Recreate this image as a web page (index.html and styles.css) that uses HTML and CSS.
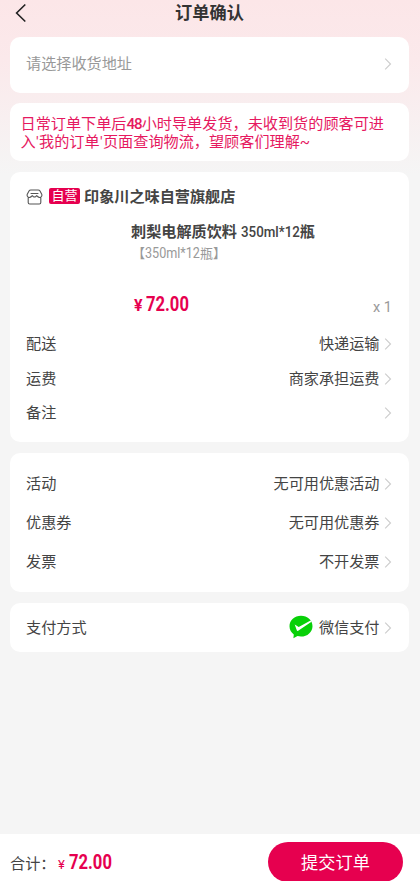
FILE: index.html
```html
<!DOCTYPE html>
<html lang="zh-CN">
<head>
<meta charset="UTF-8">
<meta name="viewport" content="width=device-width, initial-scale=1">
<title>订单确认</title>
<link rel="stylesheet" href="styles.css">
</head>
<body>
<svg class="defs" aria-hidden="true"><symbol id="chevron" viewBox="0 0 8 14"><path d="M1.200 1.700 6.500 7 1.200 12.300" fill="none" stroke="currentColor" stroke-width="1.100"/></symbol></svg>
<div class="page">
  <header class="header">
    <svg class="back" viewBox="0 0 12 20"><path d="M10.300 1.500 1.600 10l8.700 8.500" fill="none" stroke="#222" stroke-width="1.600"/></svg>
    <h1 class="title">订单确认</h1>
  </header>
  <main class="cards">
    <section class="card address">
      <div class="row"><span>请选择收货地址</span><svg class="chevron"><use href="#chevron"/></svg></div>
    </section>
    <section class="card notice">日常订单下单后<b class="hours">48</b>小时导单发货，未收到货的顾客可进<br>入<span class="quote">'</span>我的订单<span class="quote">'</span>页面查询物流，望顾客们理解~</section>
    <section class="card order">
      <div class="shop">
        <svg class="shop-icon" viewBox="0 0 17 16"><path d="M4.800 1h7.400q1.200 0 1.800 1l1.600 2.900q.8 1.800-.5 3-1.800 1.300-3.500-.4l-.8-.9-1 .9q-1.300 1-2.600 0l-1-.9-.8.9Q3.700 9.200 1.900 7.900.6 6.700 1.400 4.900L3 2q.6-1 1.800-1zM5 4.500h7M2.200 8.500v5q0 1.500 1.500 1.500h9.600q1.500 0 1.500-1.500v-5" fill="none" stroke="#555" stroke-width="1.100" stroke-linecap="round" stroke-linejoin="round"/></svg>
        <span class="badge">自营</span>
        <strong class="shop-name">印象川之味自营旗舰店</strong>
      </div>
      <div class="product">
        <div class="product-name">刺梨电解质饮料 <span class="name-spec">350ml*12</span>瓶</div>
        <div class="spec">【<span class="spec-text">350ml*12</span>瓶】</div>
        <div class="price-line">
          <span class="price"><span class="yen">¥</span><span class="amount">72.00</span></span>
          <span class="count">x 1</span>
        </div>
      </div>
      <div class="row"><span>配送</span><span class="value">快递运输<svg class="chevron"><use href="#chevron"/></svg></span></div>
      <div class="row"><span>运费</span><span class="value">商家承担运费<svg class="chevron"><use href="#chevron"/></svg></span></div>
      <div class="row"><span>备注</span><span class="value"><svg class="chevron"><use href="#chevron"/></svg></span></div>
    </section>
    <section class="card offers">
      <div class="row"><span>活动</span><span class="value">无可用优惠活动<svg class="chevron"><use href="#chevron"/></svg></span></div>
      <div class="row"><span>优惠券</span><span class="value">无可用优惠券<svg class="chevron"><use href="#chevron"/></svg></span></div>
      <div class="row"><span>发票</span><span class="value">不开发票<svg class="chevron"><use href="#chevron"/></svg></span></div>
    </section>
    <section class="card payment">
      <div class="row"><span>支付方式</span><span class="value"><svg class="pay-icon" viewBox="0 0 24 24"><path d="M12 .8C5.600.8.500 5.400.500 11.200c0 3.400 1.700 6.300 4.300 8.200L4.400 23.300l4.100-2.200c1.100.3 2.300.5 3.500.5 6.400 0 11.500-4.600 11.500-10.400S18.400.8 12 .8z" fill="#08d008"/><path d="M5.700 9.600 9.700 12 21.600 5.500l.9 1.200L9.200 15.700q-.9.5-1.400-.4z" fill="#fff"/></svg>微信支付<svg class="chevron"><use href="#chevron"/></svg></span></div>
    </section>
  </main>
  <footer class="footer">
    <div class="total"><span>合计：</span><span class="yen">¥</span><span class="amount">72.00</span></div>
    <button class="submit">提交订单</button>
  </footer>
</div>
</body>
</html>
```

FILE: styles.css
```css
* { box-sizing: border-box; }
body {
  margin: 0;
  overflow: hidden;
  font: 15.15px/20px Roboto, "Noto Sans CJK SC", sans-serif;
  color: #444;
}
.defs { display: none; }
.page {
  height: 881px;
  overflow: hidden;
  display: flex;
  flex-direction: column;
  background: linear-gradient(#fce6e8 0, #fbe9eb 60px, #f5f5f5 175px);
}
.header {
  height: 37px;
  flex: none;
  display: grid;
  grid-template-columns: 34px 1fr 34px;
  align-items: start;
  padding: 0 1px 0 0;
}
.back { width: 12px; height: 20px; margin: 3px 0 0 15px; }
.title { margin: 0; font-size: 17.2px; line-height: 27px; font-weight: 700; text-align: center; color: #333; }
.cards { flex: 1; display: flex; flex-direction: column; padding: 0 11px 0 9.5px; }
.card { background: #fff; border-radius: 10px; padding: 0 17px 0 16.5px; flex: none; }
.row { display: flex; align-items: center; justify-content: space-between; }
.value { display: flex; align-items: center; }
.chevron { width: 8px; height: 14px; margin-left: 4.5px; color: #ccc; }
.address { height: 56px; color: #999; }
.address .row { height: 53px; }
.notice {
  height: 58px;
  margin-top: 10px;
  padding: 12px 0 0 11px;
  line-height: 18.3px;
  color: #e6195f;
  white-space: nowrap;
}
.hours { font-weight: 500; letter-spacing: -1px; }
.quote { display: inline-block; width: 3.4px; text-align: center; }
.order { height: 270.5px; margin-top: 10.5px; padding-top: 15px; }
.shop { display: flex; align-items: center; height: 21px; }
.shop-icon { width: 17px; height: 16px; }
.badge {
  width: 31px;
  height: 16px;
  margin: 0 4px 2px 6px;
  border-radius: 2px;
  background: #e6004f;
  color: #fff;
  font-size: 13px;
  line-height: 16px;
  text-align: center;
}
.shop-name { font-weight: 700; }
.product { height: 119px; padding: 13px 0 0 105px; }
.product-name { font-weight: 700; white-space: pre; line-height: 22px; }
.name-spec { display: inline-block; width: 59px; font-weight: 500; font-size: 15.5px; transform: scaleX(.86); transform-origin: left; }
.spec { padding-left: 1px; font-size: 13px; line-height: 20px; color: #999; white-space: nowrap; }
.spec-text { display: inline-block; width: 55px; font-size: 14px; transform: scaleX(.9); transform-origin: left; }
.price-line { display: flex; justify-content: space-between; align-items: flex-end; height: 53px; }
.price, .total { display: flex; align-items: baseline; color: #e6004f; }
.yen { width: 14px; padding-left: 2px; font-size: 16px; font-weight: 700; }
.amount { width: 44px; font-size: 20px; line-height: 24px; font-weight: 700; transform: scaleX(.83); transform-origin: left; }
.count { font-size: 14.5px; line-height: 18px; color: #999; }
.price { margin: 0 0 1px 1px; }
.order .row { height: 34.7px; }
.offers { height: 139px; margin-top: 11px; padding-top: 11px; }
.offers .row { height: 39.3px; }
.payment { height: 48.5px; margin-top: 11px; }
.payment .row { height: 49px; }
.pay-icon { width: 24px; height: 24px; margin: -2px 6px 0 0; }
.footer { height: 47px; flex: none; display: flex; justify-content: space-between; background: #fff; padding: 8px 17px 0 10px; }
.total { height: 40px; padding-top: 8px; }
.total > :first-child { color: #444; width: 46px; white-space: nowrap; }
.total .yen { width: 13px; font-weight: 400; font-size: 13px; }
.submit { width: 135px; height: 40px; padding: 0; border: 0; border-radius: 20px; background: #e6004f; color: #fff; font: 17.2px/40px "Noto Sans CJK SC", sans-serif; }
```
